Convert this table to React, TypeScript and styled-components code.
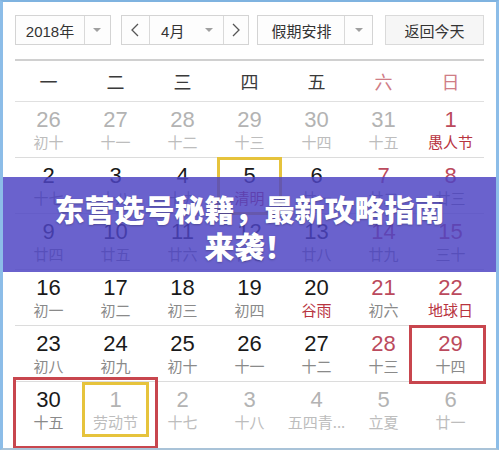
import React from "react";
import styled, { createGlobalStyle } from "styled-components";

const Global = createGlobalStyle`
  html, body { margin: 0; padding: 0; background: #fff; }
  body { font-family: "Liberation Sans", "Noto Sans CJK SC", sans-serif; }
`;

const Frame = styled.div`
  position: relative;
  width: 499px;
  height: 450px;
  box-sizing: border-box;
  border-top: 2px solid #7fb3e0;
  border-left: 3px solid #8cbde8;
  border-right: 3px solid #8cbde8;
  border-bottom: 2px solid #a9c3d8;
  background: #fff;
  overflow: hidden;
  padding: 13px 12px 0 12px;
`;

const Toolbar = styled.div`
  display: flex;
  align-items: center;
  height: 30px;
  margin-bottom: 14px;
`;

const Box = styled.div<{ $w: number; $ml?: number }>`
  display: flex;
  align-items: stretch;
  width: ${(p) => p.$w}px;
  height: 30px;
  margin-left: ${(p) => p.$ml ?? 0}px;
  box-sizing: border-box;
  border: 1px solid #d4d4d4;
  background: #fdfdfd;
  font-family: "Liberation Sans", "Noto Sans CJK SC", sans-serif;
  font-size: 15px;
  color: #333;
`;

const Part = styled.div<{ $w?: number; $divider?: boolean }>`
  display: flex;
  align-items: center;
  justify-content: center;
  ${(p) => (p.$w ? `width: ${p.$w}px;` : "flex: 1;")}
  border-right: ${(p) => (p.$divider ? "1px solid #d9d9d9" : "none")};
`;

const Caret = styled.span`
  width: 0;
  height: 0;
  border-left: 4px solid transparent;
  border-right: 4px solid transparent;
  border-top: 4px solid #a0a0a0;
`;

const TodayBtn = styled.div`
  display: flex;
  align-items: center;
  justify-content: center;
  width: 99px;
  height: 30px;
  margin-left: 12px;
  box-sizing: border-box;
  border: 1px solid #dadada;
  background: #f6f6f6;
  font-family: "Noto Sans CJK SC", sans-serif;
  font-size: 15px;
  color: #333;
`;

const Grid = styled.div`
  width: 469px;
  border-top: 2px solid #d0d0d0;
`;

const HeadRow = styled.div`
  display: grid;
  grid-template-columns: repeat(7, 67px);
  height: 40px;
  border-bottom: 1px solid #e0e0e0;
`;

const HeadCell = styled.div<{ $weekend?: boolean }>`
  display: flex;
  align-items: center;
  justify-content: center;
  font-family: "Noto Sans CJK SC", sans-serif;
  font-size: 18px;
  color: ${(p) => (p.$weekend ? "#cf7d86" : "#3a3a3a")};
`;

const Row = styled.div<{ $last?: boolean }>`
  display: grid;
  grid-template-columns: repeat(7, 67px);
  height: 55px;
  border-bottom: ${(p) => (p.$last ? "none" : "1px solid #dcdcdc")};
`;

const Cell = styled.div`
  display: flex;
  flex-direction: column;
  align-items: center;
  padding-top: 6px;
  box-sizing: border-box;
`;

const Num = styled.div<{ $tone: "dim" | "norm" | "red" }>`
  font-family: "Liberation Sans", sans-serif;
  font-size: 22px;
  line-height: 24px;
  color: ${(p) => (p.$tone === "dim" ? "#b3b3b3" : p.$tone === "red" ? "#bb4a5d" : "#1a1a1a")};
`;

const Lunar = styled.div<{ $tone: "dim" | "norm" | "red" }>`
  font-family: "Noto Sans CJK SC", sans-serif;
  font-size: 15px;
  line-height: 20px;
  margin-top: 0;
  color: ${(p) => (p.$tone === "dim" ? "#bdbdbd" : p.$tone === "red" ? "#b8343f" : "#8a8a8a")};
`;

const Mark = styled.div<{ $c: string }>`
  position: absolute;
  box-sizing: border-box;
  border: 3px solid ${(p) => p.$c};
  pointer-events: none;
`;

const Banner = styled.div`
  position: absolute;
  left: 0;
  right: 0;
  top: 175px;
  height: 95px;
  background: rgba(78, 68, 196, 0.84);
  display: flex;
  align-items: center;
  justify-content: center;
  padding: 4px 40px 0;
  box-sizing: border-box;
`;

const Title = styled.div`
  font-family: "Noto Sans CJK SC", sans-serif;
  font-weight: 900;
  font-size: 30px;
  line-height: 37px;
  color: #fff;
  text-align: center;
  text-shadow: 0 1px 2px rgba(0, 0, 0, 0.25);
`;

const Arrow = ({ dir }: { dir: "l" | "r" }) => (
  <svg width="10" height="14" viewBox="0 0 10 14">
    <polyline
      points={dir === "l" ? "8,1 2,7 8,13" : "2,1 8,7 2,13"}
      fill="none"
      stroke="#555"
      strokeWidth="1.3"
    />
  </svg>
);

type Tone = "dim" | "norm" | "red";
type Day = { n: string; l: string; nt: Tone; lt: Tone };

const d = (n: string | number, l: string, nt: Tone, lt?: Tone): Day => ({
  n: String(n),
  l,
  nt,
  lt: lt ?? (nt === "dim" ? "dim" : "norm"),
});

const rows: Day[][] = [
  [d(26, "初十", "dim"), d(27, "十一", "dim"), d(28, "十二", "dim"), d(29, "十三", "dim"), d(30, "十四", "dim"), d(31, "十五", "dim"), d(1, "愚人节", "red", "red")],
  [d(2, "十七", "norm"), d(3, "十八", "norm"), d(4, "十九", "norm"), d(5, "清明", "norm", "red"), d(6, "廿一", "norm"), d(7, "廿二", "red"), d(8, "廿三", "red")],
  [d(9, "廿四", "norm"), d(10, "廿五", "norm"), d(11, "廿六", "norm"), d(12, "廿七", "norm"), d(13, "廿八", "norm"), d(14, "廿九", "red"), d(15, "三十", "red")],
  [d(16, "初一", "norm"), d(17, "初二", "norm"), d(18, "初三", "norm"), d(19, "初四", "norm"), d(20, "谷雨", "norm", "red"), d(21, "初六", "red"), d(22, "地球日", "red", "red")],
  [d(23, "初八", "norm"), d(24, "初九", "norm"), d(25, "初十", "norm"), d(26, "十一", "norm"), d(27, "十二", "norm"), d(28, "十三", "red"), d(29, "十四", "red")],
  [d(30, "十五", "norm"), d(1, "劳动节", "dim"), d(2, "十七", "dim"), d(3, "十八", "dim"), d(4, "五四青...", "dim"), d(5, "立夏", "dim"), d(6, "廿一", "dim")],
];

const weekdays = ["一", "二", "三", "四", "五", "六", "日"];

export default function App() {
  return (
    <>
      <Global />
      <Frame>
        <Toolbar>
          <Box $w={96}>
            <Part $w={68} $divider>2018年</Part>
            <Part><Caret /></Part>
          </Box>
          <Box $w={129} $ml={10}>
            <Part $w={27} $divider><Arrow dir="l" /></Part>
            <Part $w={46}>4月</Part>
            <Part $w={27} $divider><Caret /></Part>
            <Part><Arrow dir="r" /></Part>
          </Box>
          <Box $w={116} $ml={8}>
            <Part $w={86} $divider>假期安排</Part>
            <Part><Caret /></Part>
          </Box>
          <TodayBtn>返回今天</TodayBtn>
        </Toolbar>
        <Grid>
          <HeadRow>
            {weekdays.map((w, i) => (
              <HeadCell key={w} $weekend={i >= 5}>{w}</HeadCell>
            ))}
          </HeadRow>
          {rows.map((r, ri) => (
            <Row key={ri} $last={ri === rows.length - 1}>
              {r.map((c, ci) => (
                <Cell key={ci}>
                  <Num $tone={c.nt}>{c.n}</Num>
                  <Lunar $tone={c.lt}>{c.l}</Lunar>
                </Cell>
              ))}
            </Row>
          ))}
        </Grid>
        <Mark $c="#e6c33c" style={{ left: 214, top: 155, width: 65, height: 58 }} />
        <Mark $c="#c8464e" style={{ left: 406, top: 323, width: 77, height: 59 }} />
        <Mark $c="#c8464e" style={{ left: 10, top: 375, width: 145, height: 72 }} />
        <Mark $c="#e6c33c" style={{ left: 79, top: 380, width: 67, height: 55 }} />
        <Banner>
          <Title>东营选号秘籍，最新攻略指南来袭！</Title>
        </Banner>
      </Frame>
    </>
  );
}
